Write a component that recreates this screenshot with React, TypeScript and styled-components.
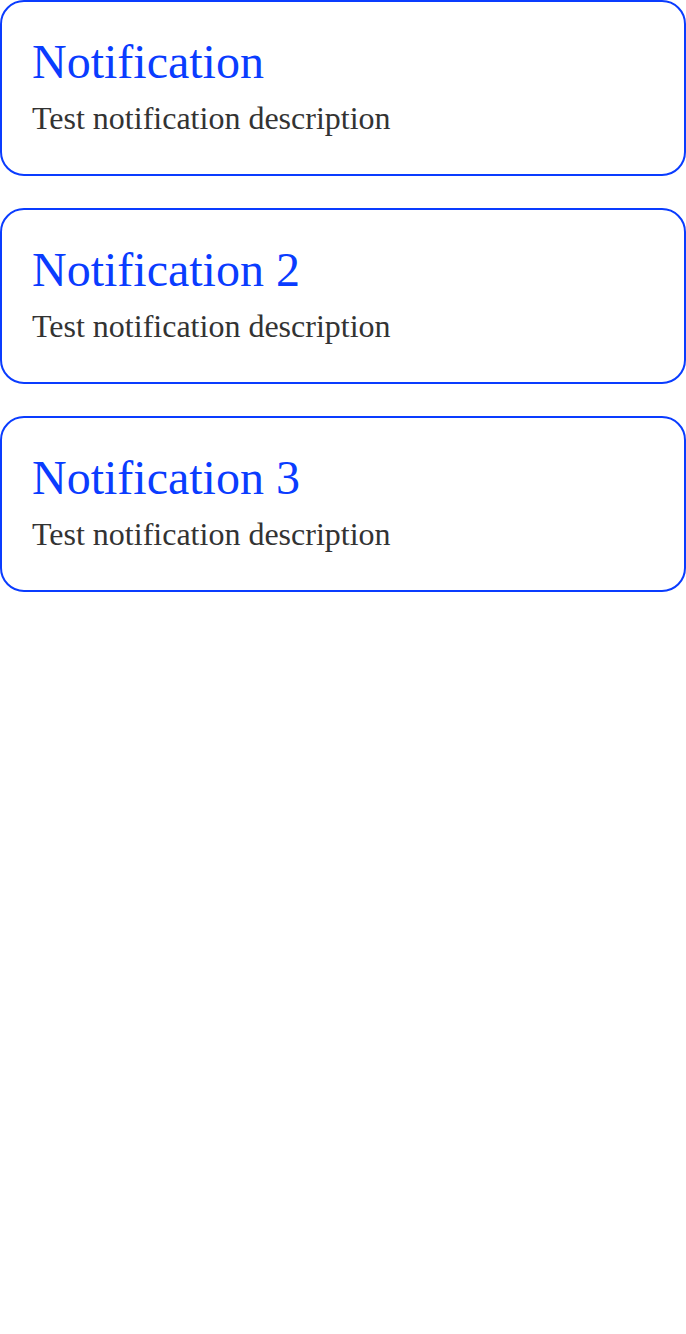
import styled, { createGlobalStyle } from 'styled-components';

const GlobalStyle = createGlobalStyle`
  html, body {
    margin: 0;
    padding: 0;
    background: #ffffff;
  }
  body {
    font-family: "Liberation Serif", "Times New Roman", serif;
  }
`;

const List = styled.div`
  display: flex;
  flex-direction: column;
  gap: 32px;
`;

const Card = styled.div`
  box-sizing: border-box;
  height: 176px;
  padding: 32px 30px 0 30px;
  border: 2px solid #0a3cff;
  border-radius: 24px;
  display: flex;
  flex-direction: column;
  gap: 8px;
`;

const Title = styled.h2`
  margin: 0;
  font-family: "Liberation Serif", "Times New Roman", serif;
  font-weight: normal;
  font-size: 48px;
  line-height: 56px;
  color: #0a3cff;
`;

const Description = styled.p`
  margin: 0;
  font-family: "Liberation Serif", "Times New Roman", serif;
  font-size: 32px;
  line-height: 40px;
  color: #333333;
`;

const notifications = [
  { title: 'Notification', description: 'Test notification description' },
  { title: 'Notification 2', description: 'Test notification description' },
  { title: 'Notification 3', description: 'Test notification description' },
];

export default function App() {
  return (
    <>
      <GlobalStyle />
      <List>
        {notifications.map((n) => (
          <Card key={n.title}>
            <Title>{n.title}</Title>
            <Description>{n.description}</Description>
          </Card>
        ))}
      </List>
    </>
  );
}
